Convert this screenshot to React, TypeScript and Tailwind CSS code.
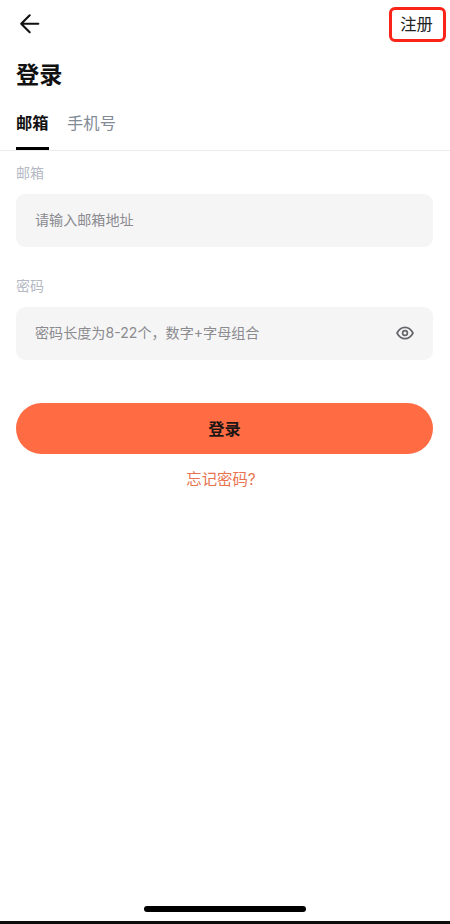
import React, { useState } from 'react'

const tabs = ['邮箱', '手机号']

function Field({ label, hint, children }: { label: string; hint: string; children?: React.ReactNode }) {
    return (
        <div className="h-[113.4px]">
            <p className="pt-[0.5px] text-[14px] leading-5 text-[#b5b9c3]">{label}</p>
            <div className="mt-[11px] flex h-[53px] items-center justify-between rounded-[9px] bg-[#f5f5f6] pl-[19px] pr-[19px]">
                <span className="pb-px text-[14.1px] leading-5 text-[#8b8b8f]">{hint}</span>
                {children}
            </div>
        </div>
    )
}

export default function App() {
    const [active, setActive] = useState(0)

    return (
        <div className="flex h-[924px] w-full flex-col overflow-hidden bg-white font-['Inter','Noto_Sans_CJK_SC',sans-serif]">
            <header className="flex h-12 items-center justify-between pl-[19px] pr-[4px]">
                <button aria-label="返回">
                    <svg width="22" height="22" viewBox="0 0 22 22" fill="none" stroke="#111" strokeWidth="2.1" strokeLinecap="round" strokeLinejoin="round">
                        <path d="M10.7 2.3 2.2 10.7 10.7 19.2M2.2 10.7H19.3" />
                    </svg>
                </button>
                <button className="flex h-[35px] w-[57px] items-center justify-center rounded-[6px] border-3 border-[#fb2419] pr-[2px] text-[16.3px] leading-none text-[#222]">
                    注册
                </button>
            </header>

            <h1 className="mt-[11px] px-4 text-[23.2px] leading-8 font-bold text-[#111]">登录</h1>

            <nav className="mt-[9px] flex h-[51px] gap-[18.5px] border-b border-[#ececee] px-4">
                {tabs.map((tab, i) => (
                    <button
                        key={tab}
                        onClick={() => setActive(i)}
                        className={`flex h-[50px] items-start border-b-[3px] pt-[11px] text-[16.3px] leading-6 ${
                            i === active ? 'border-black font-bold text-[#111]' : 'border-transparent text-[#828b96]'
                        }`}
                    >
                        {tab}
                    </button>
                ))}
            </nav>

            <main className="pt-[11px] pr-[17px] pl-4">
                <Field label="邮箱" hint="请输入邮箱地址" />
                <Field label="密码" hint="密码长度为8-22个，数字+字母组合">
                    <svg width="18" height="16" viewBox="0 0 18 16" fill="none" stroke="#66666a" strokeWidth="1.7" strokeLinejoin="round">
                        <path d="M1 8C3 4.2 5.8 2.3 9 2.3S15 4.2 17 8c-2 3.8-4.8 5.7-8 5.7S3 11.8 1 8Z" />
                        <circle cx="9" cy="8" r="2.4" />
                    </svg>
                </Field>
                <button className="mt-[14px] flex h-[51px] w-full items-center justify-center rounded-full bg-[#ff6b43] pt-[2px] text-[16.2px] font-bold text-[#1c1715]">
                    登录
                </button>
                <p className="mt-[14px] pr-[7px] text-center text-[15.4px] leading-6 text-[#e8734f]">忘记密码?</p>
            </main>

            <footer className="mt-auto">
                <div className="mx-auto h-[6px] w-[162px] rounded-full bg-black" />
                <div className="mt-[9px] h-[3px] bg-[#0d0d0a]" />
            </footer>
        </div>
    )
}
